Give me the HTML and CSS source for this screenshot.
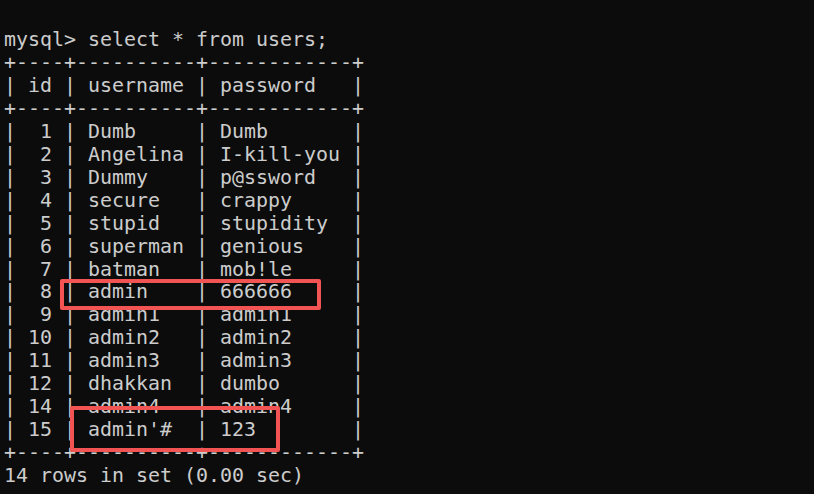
FILE: index.html
```html
<!DOCTYPE html>
<html>
<head>
<meta charset="utf-8">
<link rel="stylesheet" href="styles.css">
</head>
<body>
<div class="terminal">
<pre class="output">mysql&gt; select * from users;
+----+----------+------------+
| id | username | password   |
+----+----------+------------+
|  1 | Dumb     | Dumb       |
|  2 | Angelina | I-kill-you |
|  3 | Dummy    | p@ssword   |
|  4 | secure   | crappy     |
|  5 | stupid   | stupidity  |
|  6 | superman | genious    |
|  7 | batman   | mob!le     |
|  8 | admin    | 666666     |
|  9 | admin1   | admin1     |
| 10 | admin2   | admin2     |
| 11 | admin3   | admin3     |
| 12 | dhakkan  | dumbo      |
| 14 | admin4   | admin4     |
| 15 | admin'#  | 123        |
+----+----------+------------+
14 rows in set (0.00 sec)</pre>
<div class="mark mark-one"></div>
<div class="mark mark-two"></div>
</div>
</body>
</html>
```
FILE: styles.css
```css
html, body {
  margin: 0;
  padding: 0;
  background: #0c0c0c;
}
.terminal {
  position: relative;
  width: 814px;
  height: 494px;
  overflow: hidden;
  background: #0c0c0c;
}
.output {
  margin: 0;
  padding: 28px 0 0 4px;
  font-family: "DejaVu Sans Mono", monospace;
  font-size: 19.95px;
  line-height: 22.95px;
  color: #cccccc;
}
.mark {
  position: absolute;
  border: 4px solid #f25454;
  border-radius: 2px;
  box-sizing: border-box;
}
.mark-one {
  left: 60px;
  top: 279px;
  width: 261px;
  height: 31px;
}
.mark-two {
  left: 70px;
  top: 406px;
  width: 210px;
  height: 46px;
}
```
